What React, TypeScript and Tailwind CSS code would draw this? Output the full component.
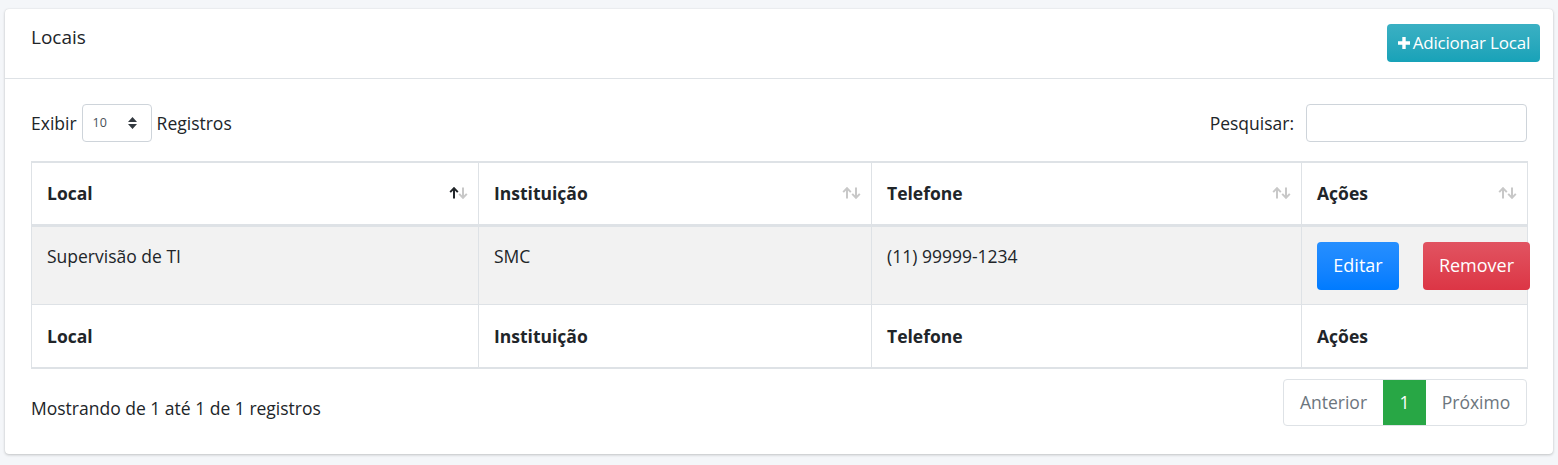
import React from 'react';

const SortIcons = ({ active = false }: { active?: boolean }) => (
  <span className="absolute right-[10px] top-1/2 -translate-y-1/2 flex items-center">
    <svg width="10" height="13" viewBox="0 0 10 13" className={active ? 'text-[#212529]' : 'text-[#c8c8c8]'}>
      <path d="M5 12V2M1.2 5.6L5 1.6l3.8 4" fill="none" stroke="currentColor" strokeWidth="2" />
    </svg>
    <svg width="10" height="13" viewBox="0 0 10 13" className="-ml-[1px] text-[#c8c8c8]">
      <path d="M5 1v10M1.2 7.4L5 11.4l3.8-4" fill="none" stroke="currentColor" strokeWidth="2" />
    </svg>
  </span>
);

const columns = ['Local', 'Instituição', 'Telefone', 'Ações'];

export default function App() {
  return (
    <div className="min-h-[465px] bg-[#f4f6f9] pt-[9px] pl-[5px] pr-[5px] pb-[12px] [font-family:'Open_Sans',sans-serif] text-[#212529]">
      <div className="w-[1548px] rounded-[4px] bg-white shadow-[0_0_1px_rgba(0,0,0,0.125),0_1px_3px_rgba(0,0,0,0.2)]">
        {/* header */}
        <div className="flex h-[70px] items-start justify-between border-b border-[#dee2e6] pl-[26px] pr-[13px]">
          <h3 className="mt-[15px] text-[19px] leading-[26px] font-normal">Locais</h3>
          <button className="mt-[15px] flex h-[38px] items-center rounded-[4px] bg-gradient-to-b from-[#3ab0c3] to-[#17a2b8] pl-[10px] pr-[10px] text-[17px] tracking-[-0.2px] text-white">
            <svg width="14" height="14" viewBox="0 0 14 14" className="mr-[2px]">
              <path d="M7 1v12M1 7h12" stroke="white" strokeWidth="3.4" />
            </svg>
            Adicionar Local
          </button>
        </div>

        {/* body */}
        <div className="px-[26px] pt-[25px] pb-[28px]">
          <div className="flex items-center justify-between">
            <div className="flex items-center text-[17.5px]">
              <span>Exibir</span>
              <div className="mx-[5px] flex h-[38px] w-[70px] items-center justify-between rounded-[4px] border border-[#ced4da] pl-[10px] pr-[13px]">
                <span className="text-[12.5px] text-[#495057]">10</span>
                <svg width="11" height="14" viewBox="0 0 11 14">
                  <path d="M5.5 1L10 6H1z M5.5 13L10 8H1z" fill="#343a40" />
                </svg>
              </div>
              <span>Registros</span>
            </div>
            <div className="flex items-center text-[17.5px]">
              <span className="mr-[12px]">Pesquisar:</span>
              <div className="h-[38px] w-[221px] rounded-[4px] border border-[#ced4da] bg-white" />
            </div>
          </div>

          <table className="mt-[19px] w-[1496px] table-fixed border-collapse text-[17.5px]">
            <colgroup>
              <col className="w-[447px]" />
              <col className="w-[393px]" />
              <col className="w-[430px]" />
              <col className="w-[226px]" />
            </colgroup>
            <thead>
              <tr className="h-[63px]">
                {columns.map((c, i) => (
                  <th
                    key={c}
                    className="relative border border-t-2 border-b-[3px] border-[#dee2e6] pl-[15px] text-left align-middle font-bold"
                  >
                    {c}
                    <SortIcons active={i === 0} />
                  </th>
                ))}
              </tr>
            </thead>
            <tbody>
              <tr className="h-[79px] bg-[#f2f2f2]">
                <td className="border border-[#dee2e6] pl-[15px] pt-[16px] align-top">Supervisão de TI</td>
                <td className="border border-[#dee2e6] pl-[15px] pt-[16px] align-top">SMC</td>
                <td className="border border-[#dee2e6] pl-[15px] pt-[16px] align-top">(11) 99999-1234</td>
                <td className="border border-[#dee2e6] pl-[15px] pt-[15px] align-top">
                  <div className="flex gap-[24px] whitespace-nowrap">
                    <button className="h-[48px] w-[82px] shrink-0 rounded-[4px] bg-gradient-to-b from-[#268fff] to-[#007bff] text-[18px] text-white">
                      Editar
                    </button>
                    <button className="h-[48px] w-[107px] shrink-0 rounded-[4px] bg-gradient-to-b from-[#e15361] to-[#dc3545] text-[18px] text-white">
                      Remover
                    </button>
                  </div>
                </td>
              </tr>
            </tbody>
            <tfoot>
              <tr className="h-[64px]">
                {columns.map((c) => (
                  <th key={c} className="border border-b-2 border-[#dee2e6] pl-[15px] text-left align-middle font-bold">
                    {c}
                  </th>
                ))}
              </tr>
            </tfoot>
          </table>

          <div className="mt-[10px] flex items-start justify-between">
            <div className="pt-[16px] text-[17.5px]">Mostrando de 1 até 1 de 1 registros</div>
            <div className="flex h-[47px] overflow-hidden rounded-[4px] border border-[#dee2e6] text-[17.5px] text-[#6c757d]">
              <span className="flex w-[99px] items-center justify-center">Anterior</span>
              <span className="flex w-[43px] items-center justify-center bg-[#28a745] text-white">1</span>
              <span className="flex w-[100px] items-center justify-center">Próximo</span>
            </div>
          </div>
        </div>
      </div>
    </div>
  );
}
